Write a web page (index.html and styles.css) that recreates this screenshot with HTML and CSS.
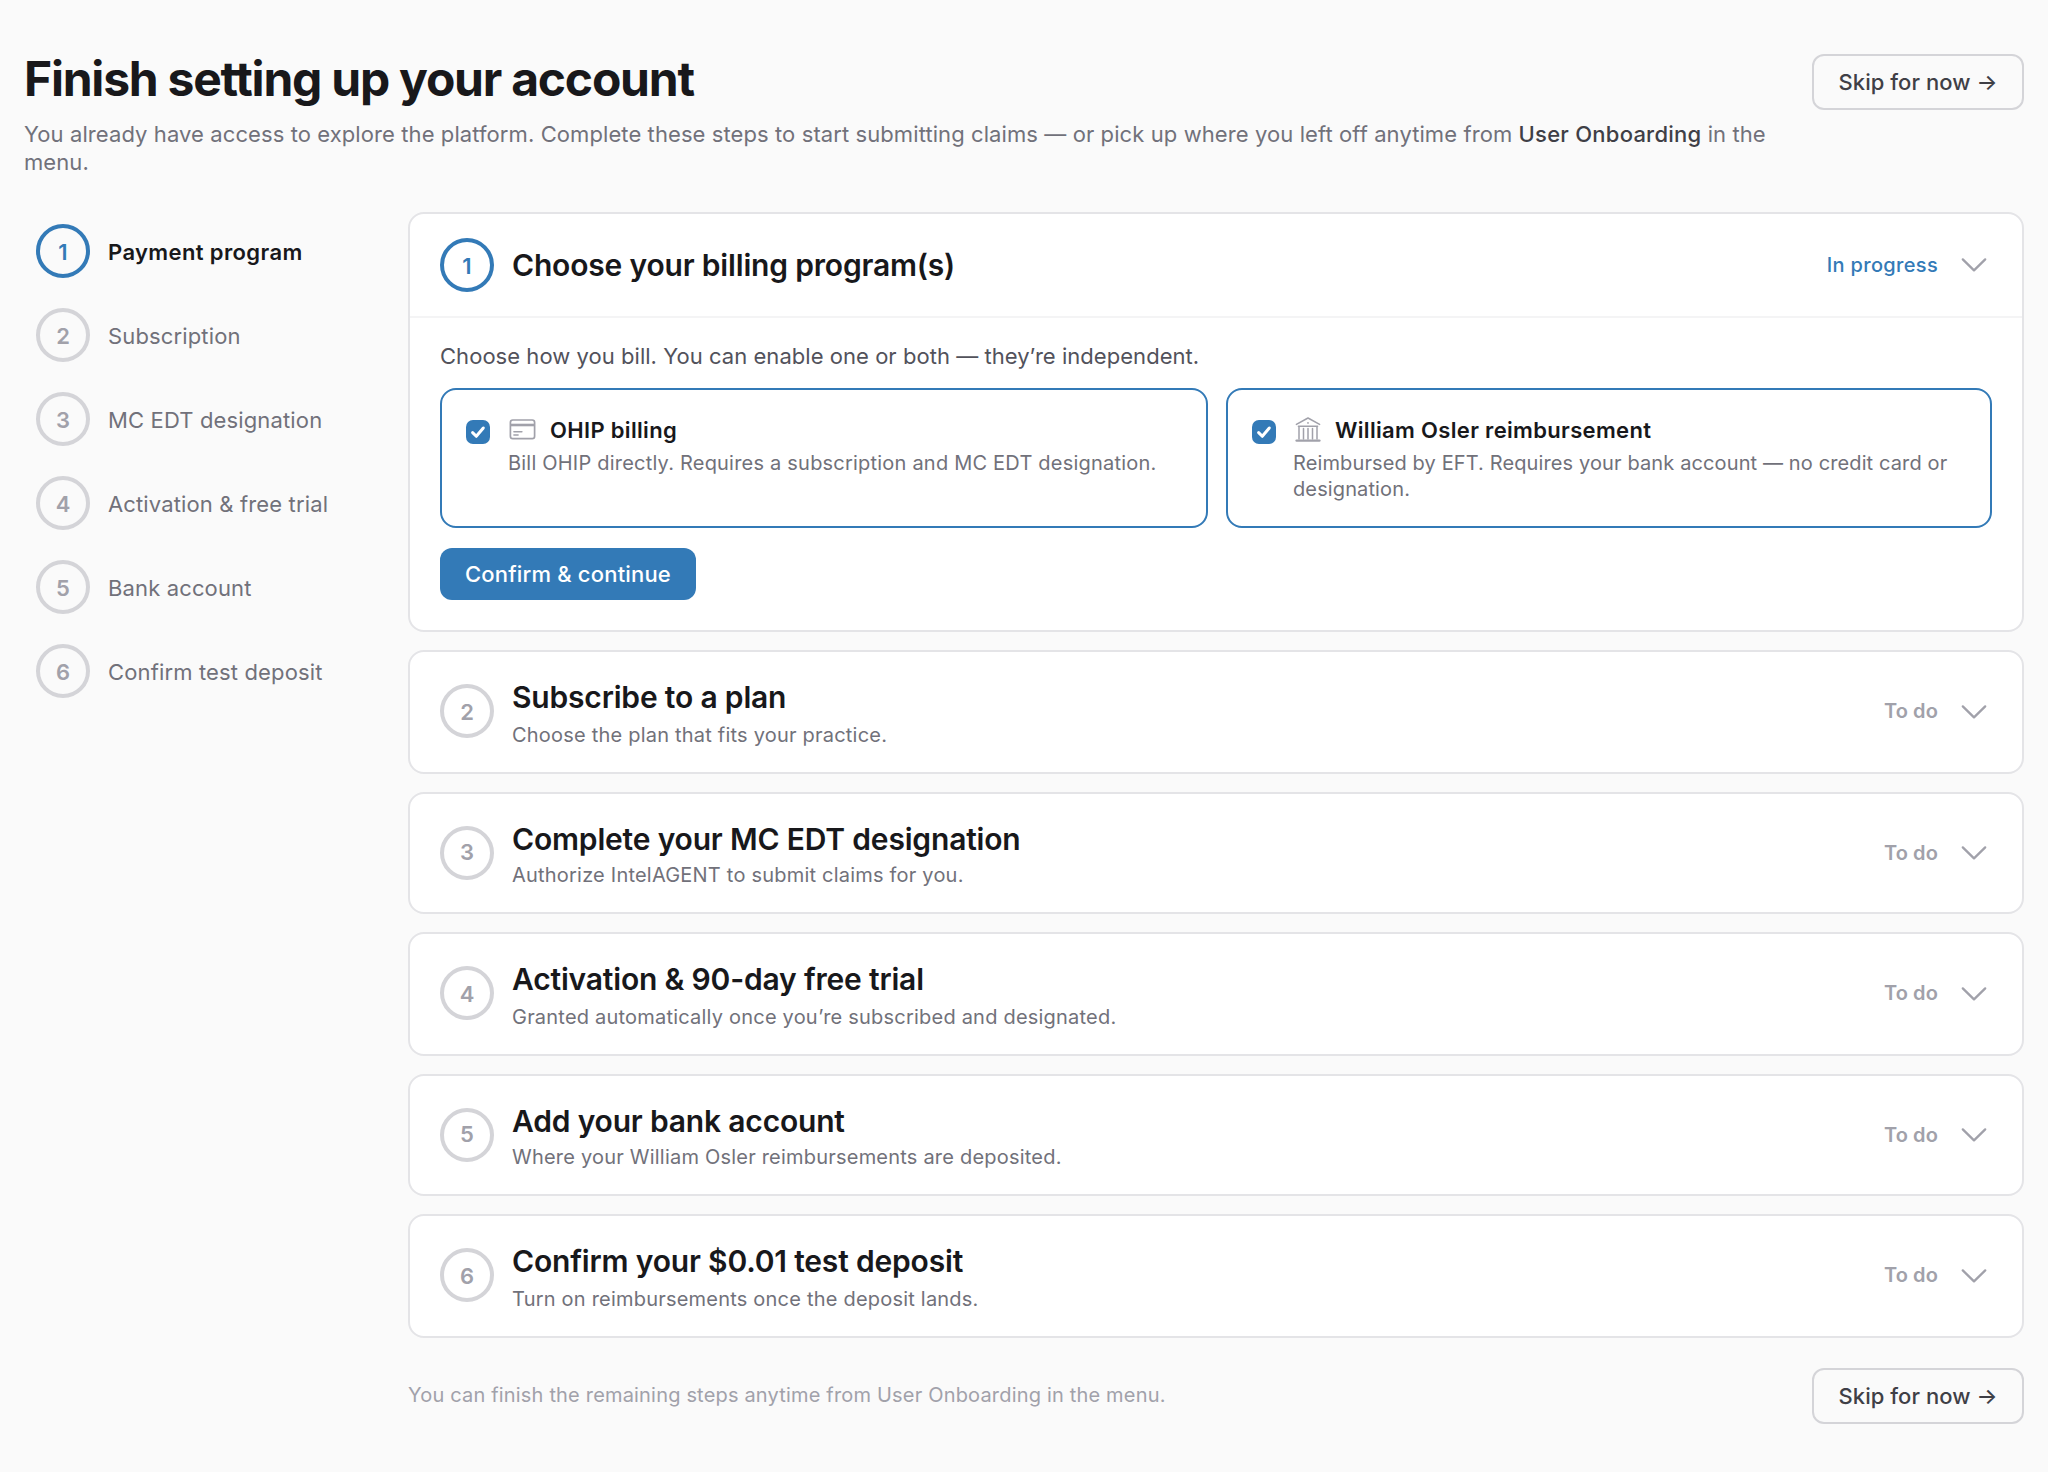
FILE: index.html
```html
<!DOCTYPE html>
<html lang="en">
<head>
<meta charset="utf-8">
<title>Finish setting up your account</title>
<link rel="stylesheet" href="styles.css">
</head>
<body>
<svg class="sprite" aria-hidden="true">
  <symbol id="chevron" viewBox="0 0 26 16"><path d="M1.8 2.4 13 13.4 24.2 2.4" fill="none" stroke="currentColor" stroke-width="2.3" stroke-linecap="round" stroke-linejoin="round"/></symbol>
  <symbol id="check" viewBox="0 0 24 24"><path d="M6.6 12.6 10.3 16.3 17.3 8" fill="none" stroke="#fff" stroke-width="3" stroke-linecap="round" stroke-linejoin="round"/></symbol>
</svg>
<div class="page">
  <header class="page-header">
    <div class="intro">
      <h1 class="title">Finish setting up your account</h1>
      <p class="subtitle">You already have access to explore the platform. Complete these steps to start submitting claims — or pick up where you left off anytime from <strong>User Onboarding</strong> in the menu.</p>
    </div>
    <button class="skip skip-top">Skip for now →</button>
  </header>

  <div class="layout">
    <nav class="steps">
      <a class="step active"><span class="num">1</span><span class="step-label">Payment program</span></a>
      <a class="step"><span class="num">2</span><span class="step-label">Subscription</span></a>
      <a class="step"><span class="num">3</span><span class="step-label">MC EDT designation</span></a>
      <a class="step"><span class="num">4</span><span class="step-label">Activation &amp; free trial</span></a>
      <a class="step"><span class="num">5</span><span class="step-label">Bank account</span></a>
      <a class="step"><span class="num">6</span><span class="step-label">Confirm test deposit</span></a>
    </nav>

    <main class="cards">
      <section class="card open active">
        <div class="card-head">
          <span class="num">1</span>
          <div class="heading"><h2>Choose your billing program(s)</h2></div>
          <span class="status">In progress</span>
          <svg class="chevron"><use href="#chevron"/></svg>
        </div>
        <div class="card-body">
          <p class="lead">Choose how you bill. You can enable one or both — they’re independent.</p>
          <div class="options">
            <label class="option">
              <svg class="checkbox"><use href="#check"/></svg>
              <span class="option-text">
                <span class="option-title">
                  <svg class="option-icon" viewBox="0 0 30 28" fill="none" stroke="currentColor"><rect x="2.4" y="4" width="24.2" height="18.6" rx="2.4" stroke-width="1.7"/><path d="M2.5 9h24" stroke-width="2.6"/><path d="M5.9 15.7h8M5.9 18.9h4.2" stroke-width="1.5" stroke-linecap="round"/></svg>
                  OHIP billing
                </span>
                <span class="option-sub bill-sub">Bill OHIP directly. Requires a subscription and MC EDT designation.</span>
              </span>
            </label>
            <label class="option">
              <svg class="checkbox"><use href="#check"/></svg>
              <span class="option-text">
                <span class="option-title">
                  <svg class="option-icon" viewBox="0 0 30 28" fill="none" stroke="currentColor" stroke-width="1.5" stroke-linejoin="round" stroke-linecap="round"><path d="M3.4 8.4 15 2l11.6 6.4M5.4 10.2h19.2M6 10.2V23M10.5 12.4V23M15 12.4V23M19.5 12.4V23M24 10.2V23"/><path d="M3.6 24.6h22.8" stroke-width="2.4"/><circle cx="15" cy="6.9" r=".9" fill="currentColor" stroke="none"/></svg>
                  William Osler reimbursement
                </span>
                <span class="option-sub">Reimbursed by EFT. Requires your bank account — no credit card or designation.</span>
              </span>
            </label>
          </div>
          <button class="confirm">Confirm &amp; continue</button>
        </div>
      </section>

      <section class="card">
        <div class="card-head">
          <span class="num">2</span>
          <div class="heading"><h2>Subscribe to a plan</h2><p>Choose the plan that fits your practice.</p></div>
          <span class="status">To do</span>
          <svg class="chevron"><use href="#chevron"/></svg>
        </div>
      </section>
      <section class="card">
        <div class="card-head">
          <span class="num">3</span>
          <div class="heading"><h2>Complete your MC EDT designation</h2><p>Authorize IntelAGENT to submit claims for you.</p></div>
          <span class="status">To do</span>
          <svg class="chevron"><use href="#chevron"/></svg>
        </div>
      </section>
      <section class="card">
        <div class="card-head">
          <span class="num">4</span>
          <div class="heading"><h2>Activation &amp; 90-day free trial</h2><p>Granted automatically once you’re subscribed and designated.</p></div>
          <span class="status">To do</span>
          <svg class="chevron"><use href="#chevron"/></svg>
        </div>
      </section>
      <section class="card">
        <div class="card-head">
          <span class="num">5</span>
          <div class="heading"><h2>Add your bank account</h2><p>Where your William Osler reimbursements are deposited.</p></div>
          <span class="status">To do</span>
          <svg class="chevron"><use href="#chevron"/></svg>
        </div>
      </section>
      <section class="card">
        <div class="card-head">
          <span class="num">6</span>
          <div class="heading"><h2>Confirm your $0.01 test deposit</h2><p>Turn on reimbursements once the deposit lands.</p></div>
          <span class="status">To do</span>
          <svg class="chevron"><use href="#chevron"/></svg>
        </div>
      </section>

      <footer class="footer">
        <p>You can finish the remaining steps anytime from User Onboarding in the menu.</p>
        <button class="skip">Skip for now →</button>
      </footer>
    </main>
  </div>
</div>
</body>
</html>
```
FILE: styles.css
```css
* { box-sizing: border-box; }

body {
  margin: 0;
  background: #fafafa;
  color: #18181b;
  font-family: Inter, "Liberation Sans", sans-serif;
  font-size: 22px;
  line-height: 28px;
  letter-spacing: 0.14px;
}

h1, h2, p { margin: 0; }
button { font: inherit; letter-spacing: inherit; }
.sprite { display: none; }

.page { padding: 49px 24px 48px; }

.page-header {
  display: flex;
  align-items: flex-start;
  justify-content: space-between;
  gap: 24px;
}
.intro { flex: 1; }
.title {
  font-size: 48px;
  line-height: 60px;
  font-weight: 700;
  letter-spacing: -1.23px;
}
.subtitle {
  margin-top: 11px;
  color: #71717a;
  letter-spacing: 0.09px;
}
.subtitle strong {
  font-weight: 500;
  color: #3f3f46;
  letter-spacing: 0.24px;
}

.skip {
  width: 212px;
  height: 56px;
  padding: 0;
  border: 2px solid #d4d4d8;
  border-radius: 12px;
  background: transparent;
  color: #3f3f46;
  font-weight: 540;
  letter-spacing: 0.05px;
}
.skip-top { margin-top: 5px; }

.layout {
  display: grid;
  grid-template-columns: 348px 1fr;
  gap: 36px;
  margin-top: 36px;
}

.steps {
  display: flex;
  flex-direction: column;
  gap: 30px;
  padding: 12px 0 0 12px;
}
.step {
  display: flex;
  align-items: center;
  gap: 18px;
  color: #71717a;
}
.step-label { padding-top: 2px; }
.step.active .step-label {
  color: #18181b;
  font-weight: 600;
  letter-spacing: 0.38px;
}

.num {
  display: flex;
  flex: none;
  align-items: center;
  justify-content: center;
  width: 54px;
  height: 54px;
  padding-top: 2px;
  border: 4px solid #d4d4d8;
  border-radius: 50%;
  color: #a1a1aa;
  font-weight: 600;
  letter-spacing: 0;
}
.active .num {
  border-color: #337ab7;
  color: #337ab7;
}

.cards { display: flex; flex-direction: column; gap: 18px; }
.card {
  height: 124px;
  border: 2px solid #e4e4e7;
  border-radius: 16px;
  background: #fff;
}
.card:nth-child(odd) { height: 122px; }
.card.open { height: auto; }

.card-head {
  display: flex;
  align-items: center;
  height: 100%;
  padding: 0 35px 0 30px;
}
.open .card-head {
  height: 104px;
  border-bottom: 2px solid #f4f4f5;
}
.card:nth-child(even) .num { margin-top: -2px; }
.card:nth-child(odd):not(.open) .num { padding: 0 0 2px; }

.heading { flex: 1; margin-left: 18px; }
.heading h2 {
  font-size: 30px;
  line-height: 40px;
  font-weight: 600;
  letter-spacing: -0.18px;
}
.heading p {
  margin-top: 5px;
  color: #71717a;
  font-size: 20px;
  line-height: 26px;
  letter-spacing: 0.21px;
}
.card:nth-child(odd) .heading p { margin-top: 3px; }

.status {
  color: #a1a1aa;
  font-size: 20px;
  font-weight: 560;
  letter-spacing: 0.12px;
}
.card:nth-child(even) .status { padding-bottom: 2px; }
.active .status { color: #337ab7; font-weight: 520; letter-spacing: 0.32px; }

.chevron {
  width: 26px;
  height: 16px;
  margin-left: 23px;
  color: #a1a1aa;
}

.card-body { padding: 24px 30px 30px; }
.lead { color: #52525b; letter-spacing: 0.04px; }

.options {
  display: grid;
  grid-template-columns: 768fr 766fr;
  gap: 18px;
  margin: 18px 0 20px;
}
.option {
  display: flex;
  gap: 18px;
  padding: 26px 24px 24px;
  border: 2px solid #337ab7;
  border-radius: 16px;
}
.option + .option { gap: 17px; }
.checkbox {
  flex: none;
  width: 24px;
  height: 24px;
  margin-top: 4px;
  border-radius: 7px;
  background: #337ab7;
}
.option-text { flex: 1; }
.option-title {
  display: flex;
  gap: 12px;
  font-weight: 600;
  letter-spacing: 0.33px;
}
.option-icon { width: 30px; height: 28px; color: #a1a1aa; }
.option-sub {
  display: block;
  margin-top: 6px;
  color: #71717a;
  font-size: 20px;
  line-height: 26px;
  letter-spacing: 0.12px;
}
.bill-sub { letter-spacing: 0.21px; }

.confirm {
  display: block;
  width: 256px;
  height: 52px;
  padding: 0;
  border: 0;
  border-radius: 12px;
  background: #337ab7;
  color: #fff;
  font-weight: 550;
  letter-spacing: 0.18px;
}

.footer {
  display: flex;
  align-items: center;
  justify-content: space-between;
  margin-top: 12px;
}
.footer p {
  color: #a1a1aa;
  font-size: 20px;
  letter-spacing: 0.18px;
  padding-bottom: 2px;
}
```
